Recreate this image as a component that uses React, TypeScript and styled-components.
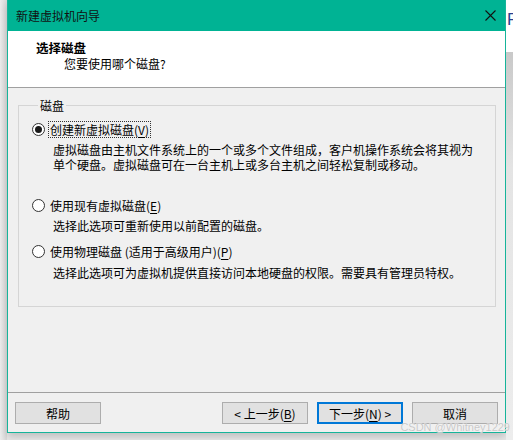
import styled, { createGlobalStyle } from "styled-components";

const Global = createGlobalStyle`
  html, body {
    margin: 0;
    padding: 0;
    background: #e9e9e9;
    overflow: hidden;
  }
  * {
    box-sizing: border-box;
  }
`;

const cjk = `"Noto Sans CJK SC", "Liberation Sans", sans-serif`;

const Desktop = styled.div`
  display: flex;
  width: 513px;
  height: 440px;
  position: relative;
  overflow: hidden;
  font-family: ${cjk};
  font-size: 12px;
  color: #000;
`;

const Gutter = styled.div`
  flex: none;
  width: 7px;
  background: linear-gradient(to right, #ececec, #d8d8d8);
`;

const Window = styled.div`
  flex: none;
  width: 499px;
  height: 433px;
  display: flex;
  flex-direction: column;
  border: 1px solid #16b49a;
  border-top: none;
  background: #f0f0f0;
  box-shadow: 0 4px 8px rgba(0, 0, 0, 0.18);
`;

const TitleBar = styled.div`
  height: 31px;
  flex: none;
  background: #00b394;
  display: flex;
  align-items: center;
  justify-content: space-between;
  padding: 0 9px 0 8px;
  color: #111;
`;

const Header = styled.div`
  height: 57px;
  flex: none;
  background: #fff;
  border-bottom: 1px solid #a0a0a0;
  padding: 9px 0 0 28px;
`;

const HeaderTitle = styled.div`
  font-weight: bold;
  line-height: 16px;
  font-size: 12.5px;
`;

const HeaderSub = styled.div`
  line-height: 16px;
  margin: 0 0 0 28px;
`;

const Body = styled.div`
  flex: 1;
  display: flex;
  flex-direction: column;
  padding: 10px 9px 0 10px;
`;

const Group = styled.fieldset`
  margin: 0;
  height: 209px;
  border: 1px solid #d5d5d5;
  padding: 8px 0 0 13px;
`;

const Legend = styled.legend`
  padding: 0 2px;
  margin-left: 6px;
  line-height: 15px;
`;

const Option = styled.div<{ $after: number }>`
  margin-bottom: ${(p) => p.$after}px;
`;

const RadioRow = styled.label`
  display: flex;
  align-items: center;
  height: 16px;
  gap: 3px;
`;

const Radio = styled.span<{ $on?: boolean }>`
  width: 13px;
  height: 13px;
  border-radius: 50%;
  border: 1px solid #333;
  background: #fff;
  display: flex;
  align-items: center;
  justify-content: center;
  &::after {
    content: "";
    width: 7px;
    height: 7px;
    border-radius: 50%;
    background: ${(p) => (p.$on ? "#1a1a1a" : "transparent")};
  }
`;

const RadioText = styled.span<{ $focus?: boolean }>`
  line-height: 15px;
  padding: 0 1px;
  border: 1px dotted ${(p) => (p.$focus ? "#333" : "transparent")};
`;

const Desc = styled.div`
  margin: 6px 0 0 21px;
  line-height: 14.5px;
`;

const Footer = styled.div`
  flex: none;
  border-top: 1px solid #a0a0a0;
  height: 40px;
  display: flex;
  align-items: flex-start;
  padding: 9px 7px 0 7px;
  gap: 9px;
`;

const Button = styled.button<{ $default?: boolean }>`
  flex: none;
  width: 86px;
  height: 22px;
  background: #e1e1e1;
  border: ${(p) => (p.$default ? "2px solid #0078d7" : "1px solid #adadad")};
  font-family: ${cjk};
  font-size: 12px;
  color: #000;
  padding: 0;
  display: flex;
  align-items: center;
  justify-content: center;
  &:first-child {
    margin-right: auto;
  }
`;

const Key = styled.u`
  text-underline-offset: 2px;
`;

const RightStrip = styled.div`
  flex: 1;
  min-width: 0;
  display: flex;
  flex-direction: column;
`;

const StripTop = styled.div`
  height: 52px;
  background: #fff;
  color: #2b3f8f;
  font-family: "Liberation Sans", sans-serif;
  font-size: 17px;
  line-height: 40px;
  padding-left: 1px;
  overflow: hidden;
`;

const StripRest = styled.div`
  flex: 1;
  background: linear-gradient(to bottom, #c9c9c9, #e4e4e4 30%, #ededed);
`;

const Watermark = styled.div`
  position: absolute;
  right: 3px;
  bottom: 7px;
  font-family: "Liberation Sans", sans-serif;
  font-size: 11px;
  color: #c8c8c8;
  text-shadow: 0 0 1px #fff;
`;

function CloseIcon() {
  return (
    <svg width="11" height="11" viewBox="0 0 11 11">
      <path d="M0.5 0.5 L10.5 10.5 M10.5 0.5 L0.5 10.5" stroke="#111" strokeWidth="1.1" />
    </svg>
  );
}

export default function App() {
  return (
    <Desktop>
      <Global />
      <Gutter />
      <Window>
        <TitleBar>
          <span>新建虚拟机向导</span>
          <CloseIcon />
        </TitleBar>
        <Header>
          <HeaderTitle>选择磁盘</HeaderTitle>
          <HeaderSub>您要使用哪个磁盘?</HeaderSub>
        </Header>
        <Body>
          <Group>
            <Legend>磁盘</Legend>
            <Option $after={25}>
              <RadioRow>
                <Radio $on />
                <RadioText $focus>
                  创建新虚拟磁盘(<Key>V</Key>)
                </RadioText>
              </RadioRow>
              <Desc>
                虚拟磁盘由主机文件系统上的一个或多个文件组成，客户机操作系统会将其视为
                <br />
                单个硬盘。虚拟磁盘可在一台主机上或多台主机之间轻松复制或移动。
              </Desc>
            </Option>
            <Option $after={10}>
              <RadioRow>
                <Radio />
                <RadioText>
                  使用现有虚拟磁盘(<Key>E</Key>)
                </RadioText>
              </RadioRow>
              <Desc>选择此选项可重新使用以前配置的磁盘。</Desc>
            </Option>
            <Option $after={0}>
              <RadioRow>
                <Radio />
                <RadioText>
                  使用物理磁盘 (适用于高级用户)(<Key>P</Key>)
                </RadioText>
              </RadioRow>
              <Desc>选择此选项可为虚拟机提供直接访问本地硬盘的权限。需要具有管理员特权。</Desc>
            </Option>
          </Group>
        </Body>
        <Footer>
          <Button>帮助</Button>
          <Button>
            &lt; 上一步(<Key>B</Key>)
          </Button>
          <Button $default>
            下一步(<Key>N</Key>) &gt;
          </Button>
          <Button>取消</Button>
        </Footer>
      </Window>
      <RightStrip>
        <StripTop>R</StripTop>
        <StripRest />
      </RightStrip>
      <Watermark>CSDN @Whitney1229</Watermark>
    </Desktop>
  );
}
